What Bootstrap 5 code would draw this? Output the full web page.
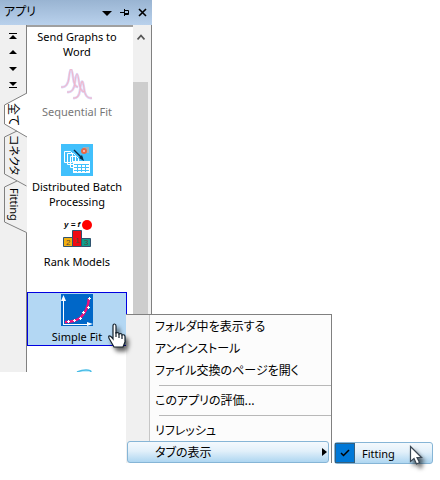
<!DOCTYPE html>
<html lang="ja">
<head>
<meta charset="utf-8">
<meta name="viewport" content="width=device-width, initial-scale=1">
<title>アプリ</title>
<link href="https://cdn.jsdelivr.net/npm/bootstrap@5.3.0/dist/css/bootstrap.min.css" rel="stylesheet">
<style>
body{font-family:"Noto Sans","Noto Sans CJK JP",sans-serif;font-size:11px;line-height:15px;color:#000;background:#fff}
button{color:inherit;border:0;background:none;padding:0;font-feature-settings:inherit}
svg{display:block}
.jp{font-family:"Noto Sans CJK JP",sans-serif;font-size:12px;font-feature-settings:"palt"}
.dock{width:152px;background:#f0f0f0}
.dock-head{height:25px;padding-bottom:2px;background:linear-gradient(#99b4d2,#b9d1ec)}
.dock-head .jp{line-height:18px;padding-bottom:2px}
.dock-body{height:347px}
.tabs{width:27px}
.tab-shape{inset:0 auto auto 0}
.pager{padding:4px 0 0 8px;height:76px}
.pager button{height:16px;width:12px}
.vtab{writing-mode:vertical-rl;text-orientation:sideways;width:19px;line-height:19px;margin-left:5px;text-align:center}
.t1{height:28px}.t2{height:52px;font-size:11px}.t3{height:46px}
.apps{border-top:2px solid #a0a0a0;background:#fff}
.app{height:75px;flex:none;padding-right:6px}
.app button{width:100px;height:54px;border:1px solid transparent;padding-top:1px;color:#000}
.app svg{margin:0 auto 3px;flex:none}
.app.first{height:40px}
.app.dim button{color:#777}
.app.on button{background:#b3d7f3;border-color:#0000e0}
.scroller{width:15px;background:#f0f0f0}
.up{height:57px;padding:8px 4px}
.thumb{background:#cdcdcd}
.edge{width:4px;border-right:1px solid #808080;border-left:0}
.ctx{left:126px;top:314px;width:206px;border:solid #808080;border-width:1px 1px 0 0;background:linear-gradient(90deg,#f0f0f0 23px,#c6c6c6 23px,#c6c6c6 24px,#fcfcfc 24px)}
.ctx button{height:22px;padding-left:29px;text-align:left;line-height:22px}
.ctx hr{margin:4px 0 3px 33px;border-color:#b8b8b8;opacity:1}
.ctx .hot,.sub label{border:1px solid #86b5d6;border-radius:3px;background:linear-gradient(#f4f9fd,#e2f0fa 45%,#aed6f1)}
.ctx .hot{margin:0 2px 0 1px;padding:0 1px 0 27px;line-height:20px}
.sub{left:334px;top:442px;width:99px}
.sub label{height:22px}
.sub input{appearance:none;width:20px;height:20px;margin:0 7px 0 0;border:1px solid #34607f;background:#0078d7}
.tick{left:6px;top:6px}
.hand{left:106px;top:322px}.arrow{left:408px;top:444px}
.cursor{pointer-events:none;overflow:visible;filter:drop-shadow(3px 4px 2px #0009)}
</style>
<script src="https://cdn.jsdelivr.net/npm/bootstrap@5.3.0/dist/js/bootstrap.bundle.min.js"></script>
</head>
<body class="position-relative min-vh-100">
<aside class="dock">
 <header class="dock-head d-flex align-items-center ps-1 pe-1">
  <span class="jp me-auto">アプリ</span>
  <button aria-label="Options"><svg width="10" height="14"><path d="M0 6h10L5 11z"/></svg></button>
  <button class="ms-2" aria-label="Pin"><svg width="10" height="14" fill="none" stroke="#000"><path d="M0 7.500h4M4.500 4v7M4.500 5.500h4v4h-4M4.500 8.500h4"/></svg></button>
  <button class="ms-2" aria-label="Close"><svg width="10" height="14" fill="none" stroke="#000" stroke-width="1.600"><path d="M1 4l7 7M8 4l-7 7"/></svg></button>
 </header>
 <div class="dock-body d-flex">
  <div class="tabs position-relative flex-shrink-0">
   <svg class="tab-shape position-absolute" width="27" height="347" fill="none" stroke="#808080"><path d="M27 68L4.500 80V99L27 112" fill="#fff"/><path d="M26.500 0V68M17 106L4.500 112V149L26.500 161M17 156L4.500 162V197L26.500 207.500V347"/></svg>
   <div class="position-relative">
    <div class="pager d-flex flex-column">
     <button aria-label="First"><svg width="12" height="12"><path d="M1 2h8v1H1zM5 4l4 4H1z"/></svg></button>
     <button aria-label="Previous"><svg width="12" height="12"><path d="M5 3l4 4H1z"/></svg></button>
     <button aria-label="Next"><svg width="12" height="12"><path d="M1 4h8L5 8z"/></svg></button>
     <button aria-label="Last"><svg width="12" height="12"><path d="M1 3h8L5 7zM1 8h8v1H1z"/></svg></button>
    </div>
    <button class="vtab jp t1 d-block">全て</button>
    <button class="vtab jp t2 d-block">コネクタ</button>
    <button class="vtab t3 d-block">Fitting</button>
   </div>
  </div>
  <div class="apps flex-grow-1 d-flex flex-column overflow-hidden">
   <div class="app first"><button class="d-flex flex-column align-items-center">Send Graphs to Word</button></div>
   <div class="app dim"><button class="d-flex flex-column align-items-center"><svg width="32" height="32" fill="none"><g stroke="#dcdafa" stroke-width="2.600"><path d="M0 18q7 1 8-10Q10-8 12 8q1 10 5 10M6 23q7 1 8-10Q16-3 18 13q1 10 6 10M12 29q6 1 7-8Q21 5 23 19q1 11 8 10"/></g><path stroke="#f0b8cc" stroke-width="1.200" d="M0 18q7 1 8-10Q10-8 12 8q1 10 5 10M6 23q7 1 8-10Q16-3 18 13q1 10 6 10M12 29q6 1 7-8Q21 5 23 19q1 11 8 10"/></svg>Sequential Fit</button></div>
   <div class="app"><button class="d-flex flex-column align-items-center"><svg width="32" height="32"><path fill="#41c0fc" d="M0 0h32v32H0z"/><g fill="#41c0fc" stroke="#fff"><path d="M3.500 7.500h6l2 2v9h-8zM6.500 9.500h6l2 2v9h-8zM9.500 12.500h6l2 2v9h-8z"/></g><path fill="#fff" d="M12 17h17v12H12z"/><path stroke="#41c0fc" fill="none" d="M13 20.500h15M13 23.500h15M13 26.500h15M16.500 20v8M20.500 20v8M24.500 20v8"/><path stroke="#05304d" stroke-width="1.500" d="M13 6l8 8"/><path d="M23 17l-5-3 3-3z" fill="#05304d"/><path fill="#9fb0bb" d="M22 3h6v6h-6z"/><circle cx="23" cy="7" r="3" fill="#e96643"/><path d="M22 7h2M23 6v2" stroke="#fcc"/></svg>Distributed Batch Processing</button></div>
   <div class="app"><button class="d-flex flex-column align-items-center"><svg width="32" height="32"><text x="3" y="8" font-family="Liberation Sans" font-size="8" font-style="italic" font-weight="bold">y = f</text><circle cx="26" cy="6" r="5" fill="#f00"/><g stroke="#30536f"><path fill="#f2b10f" d="M2.500 18.500h9v9h-9z"/><path fill="#129d8c" d="M20.500 19.500h9v8h-9z"/><path fill="#f00a12" d="M11.500 11.500h9v16h-9z"/></g><g font-family="Liberation Sans" font-size="8" fill="#5b4a3a"><text x="5" y="26">2</text><text x="14" y="24">1</text><text x="23" y="26">3</text></g></svg>Rank Models</button></div>
   <div class="app on"><button class="d-flex flex-column align-items-center"><svg width="32" height="32"><path fill="#0067c8" d="M0 0h32v32H0z"/><path d="M2.500 30V5M2 30.500h26" stroke="#fff" fill="none"/><path fill="#fff" d="M2.500 1l2.500 6H0zM32 30l-6-2v4z"/><path d="M4 28q9 0 15-4 8-7 9-20" fill="none" stroke="#f0107c" stroke-width="2.500"/><path d="M6 27.500h3M7.500 26v3M12 26.500h3M13.500 25v3M18 24.500h3M19.500 23v3M21 18.500h3M22.500 17v3M26 13.500h3M27.500 12v3M27 4.500h3M28.500 3v3" stroke="#fff"/></svg>Simple Fit</button></div>
   <div class="app"><button class="d-flex flex-column align-items-center" aria-label="Next app"><svg width="32" height="32"><path d="M16 3q5-2 9-2 5 0 5 2l-3 3" fill="#c8eefc" stroke="#48bce6" stroke-width="1.500"/></svg></button></div>
  </div>
  <div class="scroller d-flex flex-column flex-shrink-0">
   <div class="up"><svg width="8" height="8" fill="none" stroke="#555" stroke-width="1.800"><path d="M0.500 6.500L4 2.500l3.500 4"/></svg></div>
   <div class="thumb flex-grow-1"></div>
  </div>
  <div class="edge flex-shrink-0"></div>
 </div>
</aside>
<div class="ctx position-absolute d-flex flex-column jp">
 <button>フォルダ中を表示する</button>
 <button>アンインストール</button>
 <button>ファイル交換のページを開く</button>
 <hr>
 <button>このアプリの評価...</button>
 <hr>
 <button>リフレッシュ</button>
 <button class="hot d-flex align-items-center justify-content-between">タブの表示<svg width="5" height="8"><path d="M0 0l5 4-5 4z"/></svg></button>
</div>
<div class="sub position-absolute">
 <label class="d-flex align-items-center" for="fitting"><input type="checkbox" id="fitting" checked>Fitting</label>
 <svg class="tick position-absolute" width="10" height="10" fill="none" stroke="#000" stroke-width="1.500"><path d="M1 5l2.500 2.500L9 2"/></svg>
</div>
<svg class="cursor hand position-absolute" width="22" height="28" fill="#fff" stroke="#14202b" stroke-width="1.200"><path d="M7 17V4q0-2 1.500-2T10 4v7q3-1 3 1 3-1 3 1 3-1 3 2v5l-2 5H8l-4-7q-2-3-1-4 1-1 4 3z"/><path d="M10 10v5M13 12v4M16 13v4"/></svg>
<svg class="cursor arrow position-absolute" width="18" height="22" fill="#fff" stroke="#3a4652" stroke-width="1.200"><path d="M2.500 2.500v15l3.500-3 2.500 5.500 3-1.500-2.500-5h4.500z"/></svg>
</body>
</html>
